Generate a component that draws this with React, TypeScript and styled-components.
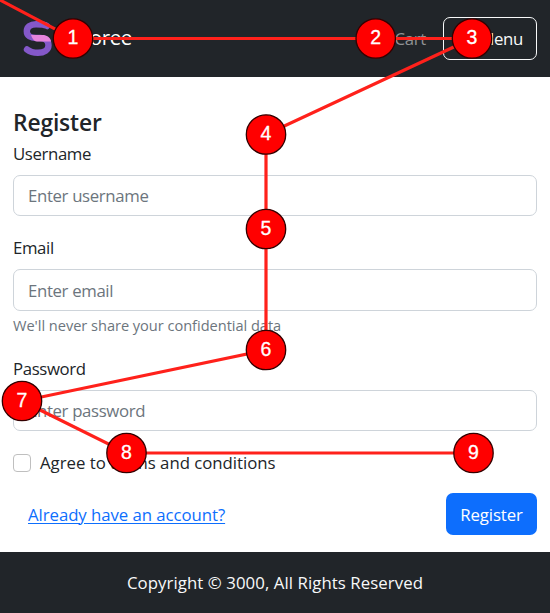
import React from "react";
import styled, { createGlobalStyle } from "styled-components";

const Global = createGlobalStyle`
  * { box-sizing: border-box; }
  body { margin: 0; background: #fff; color: #212529; font: 16.8px/26px "Open Sans", "Noto Sans", sans-serif; }
`;
const Page = styled.div`
  position: relative; width: 550px; height: 613px; overflow: hidden;
  display: flex; flex-direction: column;
`;
const Header = styled.header`
  height: 77px; flex: none; background: #212529; color: #fff;
  display: flex; align-items: center; padding: 0 13px 0 14px;
`;
const Logo = styled.svg`width: 48px; height: 77px; flex: none;`;
const Brand = styled.a`
  font-size: 20.5px; font-weight: 500; margin-left: 10px; padding-bottom: 3px; letter-spacing: -0.4px;
`;
const Cart = styled.a`margin-left: auto; margin-right: 17px; color: #909294; letter-spacing: -0.3px;`;
const MenuButton = styled.button`
  width: 94px; height: 43px; border: 1px solid #f8f9fa; border-radius: 7px; text-align: right;
  background: transparent; color: #f8f9fa; font: inherit; letter-spacing: -0.35px; padding: 0 13px;
`;
const Form = styled.form`
  height: 475px; flex: none; padding: 33px 13px 0; display: flex; flex-direction: column;
`;
const Title = styled.h1`
  margin: 0; height: 31px; font-size: 22.8px; line-height: 25px; font-weight: 600; letter-spacing: -0.15px;
`;
const Field = styled.div<{ $h: number }>`height: ${p => p.$h}px; flex: none; display: flex; flex-direction: column;`;
const Label = styled.label`height: 34px; flex: none; letter-spacing: -0.38px;`;
const Input = styled.input<{ $h?: number }>`
  height: ${p => p.$h ?? 41}px; flex: none; width: 100%; border: 1px solid #ced4da; border-radius: 7px; padding: 0 14px;
  font: inherit; color: #212529; letter-spacing: -0.35px; background: #fff;
  &::placeholder { color: #6c757d; opacity: 1; }
`;
const Help = styled.small`
  margin-top: 3px; color: #6c757d; font-size: 14.6px; line-height: 22px; letter-spacing: -0.03px;
`;
const Agreement = styled.label`
  display: flex; align-items: center; height: 26px; gap: 9px; letter-spacing: -0.02px;
`;
const Checkbox = styled.input`
  appearance: none; margin: 0; width: 18px; height: 18px; border: 1px solid #bfbfbf; border-radius: 4px;
`;
const Actions = styled.div`
  display: flex; justify-content: space-between; align-items: center; margin-top: 17px; padding-left: 15px;
`;
const SignIn = styled.a`
  color: #0d6efd; text-decoration: underline; text-underline-offset: 2px; text-decoration-thickness: 1px;
  letter-spacing: -0.06px; padding-top: 1px;
`;
const Submit = styled.button`
  width: 91px; height: 42px; border: 0; border-radius: 7px; background: #0d6efd; color: #fff;
  font: inherit; padding: 1px 0 0; letter-spacing: -0.1px;
`;
const Footer = styled.footer`
  flex: 1; background: #212529; color: #f8f9fa; display: flex; align-items: center; justify-content: center;
  padding-top: 1px; letter-spacing: 0.07px;
`;
const Overlay = styled.svg`position: absolute; inset: 0; width: 550px; height: 613px; pointer-events: none;`;

const stops = [[73, 38.5], [375.7, 38.5], [472, 38.5], [266, 134.5], [266, 229], [266, 350], [22, 401], [126.5, 453], [473.5, 453]];

export default function App() {
  return (
    <Page>
      <Global />
      <Header>
        <Logo viewBox="14 0 48 77" fill="none">
          <path d="M47 26C44.5 24.2 41 24.2 36 24.2C30.5 24.2 26.8 27 26.8 31.2C26.8 36 31 38 36 38H40C45.5 38 48.5 41 48.5 45.2C48.5 50 44 52.8 38 52.8C34 52.8 30 52 27 49.5" stroke="#8458c9" strokeWidth="6.4" strokeLinecap="round" />
          <path d="M31 35H42C47 35 50.5 37.5 51 41.5H37C34 41.5 32.2 38.5 31 35Z" fill="#e584dc" />
        </Logo>
        <Brand>Storee</Brand>
        <Cart>Cart</Cart>
        <MenuButton>Menu</MenuButton>
      </Header>
      <Form>
        <Title>Register</Title>
        <Field $h={94}>
          <Label>Username</Label>
          <Input placeholder="Enter username" />
        </Field>
        <Field $h={121}>
          <Label>Email</Label>
          <Input $h={42} placeholder="Enter email" />
          <Help>We'll never share your confidential data</Help>
        </Field>
        <Field $h={94}>
          <Label>Password</Label>
          <Input placeholder="Enter password" />
        </Field>
        <Agreement><Checkbox type="checkbox" />Agree to terms and conditions</Agreement>
        <Actions><SignIn>Already have an account?</SignIn><Submit type="button">Register</Submit></Actions>
      </Form>
      <Footer>Copyright © 3000, All Rights Reserved</Footer>
      <Overlay viewBox="0 0 550 613">
        <polyline points={"-2,-1 " + stops.map(s => s.join(",")).join(" ")} fill="none" stroke="#ff211b" strokeWidth="3.2" />
        {stops.map(([x, y], i) => (
          <g key={i}>
            <circle cx={x} cy={y} r="19.7" fill="#f00" stroke="#300" strokeWidth="1.3" />
            <text x={x} y={y + 5.5} textAnchor="middle" fill="#fff" stroke="#fff" strokeWidth="0.3" fontSize="19.5" fontFamily="Liberation Sans, sans-serif">{i + 1}</text>
          </g>
        ))}
      </Overlay>
    </Page>
  );
}
